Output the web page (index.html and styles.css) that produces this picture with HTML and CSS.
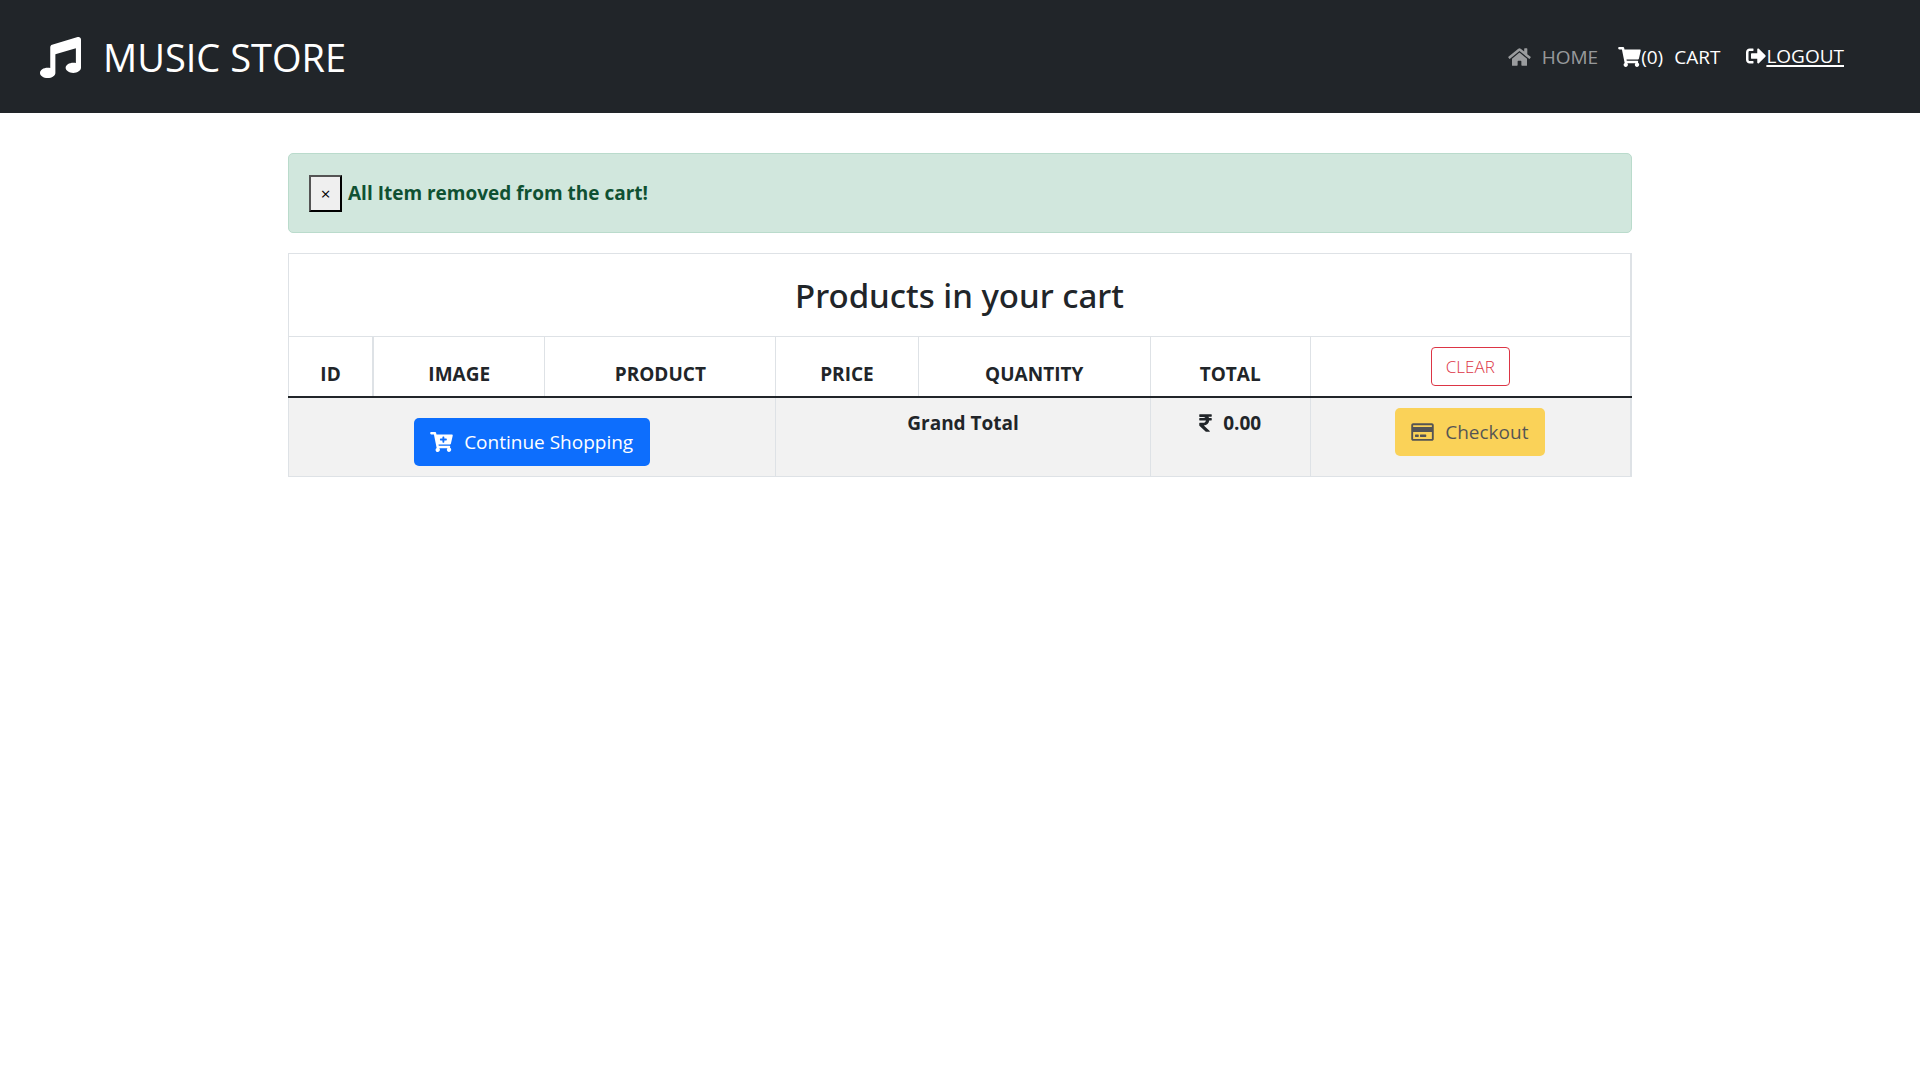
FILE: index.html
```html
<!DOCTYPE html>
<html lang="en">
<head>
<meta charset="utf-8">
<meta name="viewport" content="width=device-width, initial-scale=1">
<title>Music Store - Cart</title>
<link rel="stylesheet" href="styles.css">
</head>
<body>
<header class="navbar">
  <a class="brand" href="#">
    <svg class="brand-icon" viewBox="0 0 512 512" aria-hidden="true"><path d="M511.99 32.01c0-21.71-21.1-37.01-41.6-30.51L150.4 96c-13.3 4.2-22.4 16.5-22.4 30.5v261.42c-10.05-2.38-20.72-3.92-32-3.92-53.02 0-96 28.65-96 64s42.98 64 96 64 96-28.65 96-64V214.31l256-75.02v184.63c-10.05-2.38-20.72-3.92-32-3.92-53.02 0-96 28.65-96 64s42.98 64 96 64 96-28.65 96-64l-.01-319.99z"/></svg>
    <span>MUSIC STORE</span>
  </a>
  <nav class="nav">
    <a class="nav-link muted" href="#">
      <svg class="icon" viewBox="0 0 576 512" aria-hidden="true"><path d="M280.37 148.26L96 300.11V464a16 16 0 0 0 16 16l112.06-.29a16 16 0 0 0 15.92-16V368a16 16 0 0 1 16-16h64a16 16 0 0 1 16 16v95.64a16 16 0 0 0 16 16.05L464 480a16 16 0 0 0 16-16V300L295.67 148.26a12.19 12.19 0 0 0-15.3 0zM571.6 251.47L488 182.56V44.05a12 12 0 0 0-12-12h-56a12 12 0 0 0-12 12v72.61L318.47 43a48 48 0 0 0-61 0L4.34 251.47a12 12 0 0 0-1.6 16.9l25.5 31A12 12 0 0 0 45.15 301l235.22-193.74a12.19 12.19 0 0 1 15.3 0L530.9 301a12 12 0 0 0 16.9-1.6l25.5-31a12 12 0 0 0-1.7-16.93z"/></svg>
      <span class="label">HOME</span>
    </a>
    <a class="nav-link" href="#">
      <svg class="icon" viewBox="0 0 576 512" aria-hidden="true"><path d="M528.12 301.319l47.273-208C578.806 78.301 567.391 64 551.99 64H159.208l-9.166-44.81C147.758 8.021 137.93 0 126.529 0H24C10.745 0 0 10.745 0 24v16c0 13.255 10.745 24 24 24h69.883l70.248 343.435C147.325 417.1 136 435.222 136 456c0 30.928 25.072 56 56 56s56-25.072 56-56c0-15.674-6.447-29.835-16.824-40h209.647C430.447 426.165 424 440.326 424 456c0 30.928 25.072 56 56 56s56-25.072 56-56c0-22.172-12.888-41.332-31.579-50.405l5.517-24.276c3.413-15.018-8.002-29.319-23.403-29.319H218.117l-6.545-32h293.145c11.206 0 20.92-7.754 23.403-18.681z"/></svg>
      <span>(0)</span>
      <span class="label">CART</span>
    </a>
    <a class="nav-link logout" href="#">
      <svg class="icon square" viewBox="0 0 512 512" aria-hidden="true"><path d="M497 273L329 441c-15 15-41 4.5-41-17v-96H152c-13.3 0-24-10.7-24-24v-96c0-13.3 10.7-24 24-24h136V88c0-21.4 25.9-32 41-17l168 168c9.3 9.4 9.3 24.6 0 34zM192 436v-40c0-6.6-5.4-12-12-12H96c-17.7 0-32-14.3-32-32V160c0-17.7 14.3-32 32-32h84c6.6 0 12-5.4 12-12V76c0-6.6-5.4-12-12-12H96c-53 0-96 43-96 96v192c0 53 43 96 96 96h84c6.6 0 12-5.4 12-12z"/></svg>
      <span>LOGOUT</span>
    </a>
  </nav>
</header>

<main class="content">
  <div class="alert" role="alert">
    <button class="close" type="button" aria-label="Close">×</button>
    <strong>All Item removed from the cart!</strong>
  </div>

  <table class="cart">
    <colgroup>
      <col class="c-id"><col class="c-image"><col class="c-product"><col class="c-price"><col class="c-qty"><col class="c-total"><col>
    </colgroup>
    <thead>
      <tr><td class="title-cell" colspan="7"><h1 class="title">Products in your cart</h1></td></tr>
      <tr>
        <th scope="col">ID</th>
        <th scope="col">IMAGE</th>
        <th scope="col">PRODUCT</th>
        <th scope="col">PRICE</th>
        <th scope="col">QUANTITY</th>
        <th scope="col">TOTAL</th>
        <th class="clear-cell" scope="col"><a class="btn-clear" href="#">CLEAR</a></th>
      </tr>
    </thead>
    <tbody>
      <tr class="summary">
        <td class="continue-cell" colspan="3">
          <a class="btn btn-primary" href="#">
            <svg class="icon" viewBox="0 0 576 512" aria-hidden="true"><path d="M504.717 320H211.572l6.545 32h268.418c15.401 0 26.816 14.301 23.403 29.319l-5.517 24.276C523.112 414.668 536 433.828 536 456c0 31.202-25.519 56.444-56.824 55.994-29.823-.429-54.35-24.631-55.155-54.447-.44-16.287 6.085-31.049 16.803-41.548H231.176C241.553 426.165 248 440.326 248 456c0 31.813-26.528 57.431-58.67 55.938-28.54-1.325-51.751-24.385-53.251-52.917-1.158-22.034 10.436-41.455 28.051-51.586L93.883 64H24C10.745 64 0 53.255 0 40V24C0 10.745 10.745 0 24 0h102.529c11.401 0 21.228 8.021 23.513 19.19L159.208 64H551.99c15.401 0 26.816 14.301 23.403 29.319l-47.273 208C525.637 312.246 515.923 320 504.717 320zM408 168h-48v-40c0-8.837-7.163-16-16-16h-16c-8.837 0-16 7.163-16 16v40h-48c-8.837 0-16 7.163-16 16v16c0 8.837 7.163 16 16 16h48v40c0 8.837 7.163 16 16 16h16c8.837 0 16-7.163 16-16v-40h48c8.837 0 16-7.163 16-16v-16c0-8.837-7.163-16-16-16z"/></svg>
            <span>Continue Shopping</span>
          </a>
        </td>
        <td colspan="2"><b>Grand Total</b></td>
        <td>
          <b class="amount">
            <svg class="rupee" viewBox="0 0 320 512" role="img" aria-label="Rupees"><path d="M308 96c6.627 0 12-5.373 12-12V44c0-6.627-5.373-12-12-12H12C5.373 32 0 37.373 0 44v44.748c0 6.627 5.373 12 12 12h85.28c27.308 0 48.261 9.958 60.97 27.252H12c-6.627 0-12 5.373-12 12v40c0 6.627 5.373 12 12 12h158.757c-6.217 36.086-32.921 58.632-74.757 58.632H12c-6.627 0-12 5.373-12 12v53.012c0 3.349 1.4 6.546 3.861 8.818l165.052 152.356a12.001 12.001 0 0 0 8.139 3.182h82.562c10.924 0 16.166-13.408 8.139-20.818L116.871 319.906c76.499-2.34 131.144-53.395 138.318-127.906H308c6.627 0 12-5.373 12-12v-40c0-6.627-5.373-12-12-12h-58.69c-3.486-11.541-8.28-22.246-14.252-32H308z"/></svg>
            <span>0.00</span>
          </b>
        </td>
        <td>
          <button class="btn btn-warning" type="button" disabled>
            <svg class="icon" viewBox="0 0 576 512" aria-hidden="true"><path d="M527.9 32H48.1C21.5 32 0 53.5 0 80v352c0 26.5 21.5 48 48.1 48h479.8c26.6 0 48.1-21.5 48.1-48V80c0-26.5-21.5-48-48.1-48zM54.1 80h467.8c3.3 0 6 2.7 6 6v42H48.1V86c0-3.3 2.7-6 6-6zm467.8 352H54.1c-3.3 0-6-2.7-6-6V256h479.8v170c0 3.3-2.7 6-6 6zM192 332v40c0 6.6-5.4 12-12 12h-72c-6.6 0-12-5.4-12-12v-40c0-6.6 5.4-12 12-12h72c6.6 0 12 5.4 12 12zm192 0v40c0 6.6-5.4 12-12 12H236c-6.6 0-12-5.4-12-12v-40c0-6.6 5.4-12 12-12h136c6.6 0 12 5.4 12 12z"/></svg>
            <span>Checkout</span>
          </button>
        </td>
      </tr>
    </tbody>
  </table>
</main>
</body>
</html>
```
FILE: styles.css
```css
*, *::before, *::after { box-sizing: border-box; }

body {
  margin: 0;
  font-family: "Segoe UI", "Open Sans", "Noto Sans", sans-serif;
  font-size: 19px;
  line-height: 30px;
  color: #212529;
  background: #fff;
}

svg { fill: currentColor; flex: none; }
.icon { width: 23px; height: 20px; }
.icon.square { width: 20px; }

/* Top bar */
.navbar {
  display: flex;
  align-items: center;
  justify-content: space-between;
  padding: 27px 76px 26px 40px;
  background: #212529;
}
.brand {
  display: flex;
  align-items: center;
  gap: 22px;
  color: #fff;
  font-size: 38px;
  line-height: 60px;
  text-decoration: none;
}
.brand-icon { width: 41px; height: 41px; }
.nav { display: flex; align-items: center; }
.nav-link {
  display: flex;
  align-items: center;
  margin-right: 20px;
  color: #fff;
  font-size: 19px;
  text-decoration: none;
}
.nav-link.muted { color: rgba(255, 255, 255, .55); }
.nav-link .label { margin-left: 11px; }
.nav-link.logout { margin: 0 0 2px 6px; text-decoration: underline; text-underline-offset: 2px; text-decoration-thickness: 2px; }

/* Page body */
.content { width: 70%; margin: 40px auto; }

.alert {
  display: flex;
  align-items: center;
  gap: 6px;
  margin-bottom: 20px;
  padding: 20px;
  height: 80px;
  color: #0f5132;
  background: #d1e7dd;
  border: 1px solid #badbcc;
  border-radius: 5px;
}
.close {
  width: 33px;
  height: 37px;
  padding: 2px 0 0;
  font: inherit;
  font-size: 17px;
  color: #000;
  background: #efefef;
  border: 2px outset #000;
}

/* Cart table */
.cart {
  width: 100%;
  table-layout: fixed;
  border-collapse: collapse;
  text-align: center;
  border: 1px solid #dee2e6;
  border-right-width: 2px;
}
.c-id { width: 6.3%; }
.c-image { width: 12.8%; }
.c-product { width: 17.2%; }
.c-price { width: 10.6%; }
.c-qty { width: 17.3%; }
.c-total { width: 11.9%; }
.cart th, .cart td {
  padding: 10px;
  border: 1px solid #dee2e6;
  vertical-align: top;
}
.cart th {
  padding-bottom: 7px;
  border-bottom: 2px solid #212529;
  vertical-align: bottom;
}
.cart th:first-child { border-right-width: 2px; }
.cart .title-cell { padding: 21px 10px 19px; }
.title {
  margin: 0;
  font-family: "Segoe UI", "Noto Sans", sans-serif;
  font-size: 33px;
  font-weight: 500;
  line-height: 42px;
}
.cart .clear-cell { padding-bottom: 10px; }
.summary { background: #f2f2f2; }
.cart .continue-cell { padding-top: 20px; }

.btn-clear {
  display: block;
  width: fit-content;
  margin: 0 auto;
  padding: 3px 14px;
  color: #dc3545;
  font-size: 17px;
  font-weight: 300;
  line-height: 31px;
  text-decoration: none;
  border: 1px solid #dc3545;
  border-radius: 4px;
}
.btn {
  display: flex;
  align-items: center;
  gap: 11px;
  width: fit-content;
  margin: 0 auto;
  padding: 9px 17px 9px 16px;
  font: inherit;
  border: 0;
  border-radius: 5px;
  text-decoration: none;
}
.btn-primary { color: #fff; background: #0d6efd; }
.btn-warning { color: #000; background: #ffc107; opacity: .65; }
.amount { display: flex; align-items: center; justify-content: center; gap: 11px; }
.rupee { width: 13px; height: 20px; }
```
